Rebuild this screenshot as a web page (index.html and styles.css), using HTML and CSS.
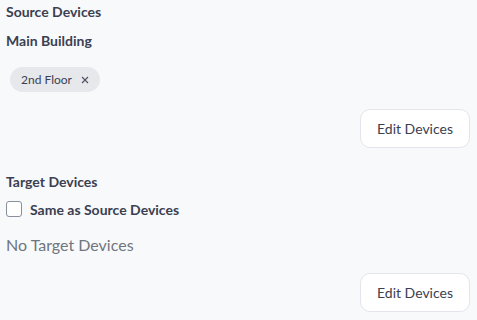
FILE: index.html
```html
<!DOCTYPE html>
<html>
<head>
<meta charset="utf-8">
<link rel="stylesheet" href="styles.css">
</head>
<body>
<div class="page">
  <div class="section-title">Source Devices</div>
  <div class="group-title">Main Building</div>
  <div class="chips">
    <span class="chip">2nd Floor <span class="chip-x"><svg width="8" height="8" viewBox="0 0 8 8"><path d="M1 1L7 7M7 1L1 7" stroke="#4b5060" stroke-width="1.1" fill="none"/></svg></span></span>
  </div>
  <div class="actions first"><button class="btn">Edit Devices</button></div>
  <div class="section-title target">Target Devices</div>
  <label class="check-row"><span class="checkbox"></span><span class="check-label">Same as Source Devices</span></label>
  <div class="empty">No Target Devices</div>
  <div class="actions second"><button class="btn">Edit Devices</button></div>
</div>
</body>
</html>
```
FILE: styles.css
```css
html, body {
  margin: 0;
  padding: 0;
  background: #f8f9fb;
}
body {
  font-family: Lato, "Open Sans", sans-serif;
  color: #3b4050;
}
.page {
  padding: 2px 7px 0 6px;
  display: flex;
  flex-direction: column;
}
.section-title {
  font-size: 14px;
  line-height: 20px;
  font-weight: 700;
  color: #3b4050;
}
.group-title {
  margin-top: 9px;
  font-size: 14px;
  line-height: 20px;
  font-weight: 700;
  color: #3b4050;
}
.chips {
  margin-top: 16px;
  display: flex;
  padding-left: 4px;
}
.chip {
  display: inline-flex;
  align-items: center;
  height: 25px;
  padding: 0 11px 0 11px;
  border-radius: 13px;
  background: #e6e8ec;
  font-size: 12px;
  color: #3b4050;
  box-sizing: border-box;
}
.chip-x {
  display: inline-flex;
  margin-left: 9px;
}
.actions {
  display: flex;
  justify-content: flex-end;
}
.actions.first { margin-top: 17px; }
.actions.second { margin-top: 17px; }
.btn {
  width: 110px;
  height: 39px;
  background: #ffffff;
  border: 1px solid #e3e5ea;
  border-radius: 10px;
  font-family: Lato, sans-serif;
  font-size: 14px;
  color: #3b4050;
  padding: 0;
}
.section-title.target { margin-top: 24px; }
.check-row {
  margin-top: 7px;
  display: flex;
  align-items: center;
  height: 20px;
}
.checkbox {
  width: 16px;
  height: 16px;
  box-sizing: border-box;
  border: 1px solid #8a8f9c;
  border-radius: 3px;
  background: #fff;
}
.check-label {
  margin-left: 8px;
  font-size: 14px;
  font-weight: 700;
  color: #3b4050;
}
.empty {
  margin-top: 15px;
  font-size: 16px;
  line-height: 22px;
  color: #70757f;
}
```
